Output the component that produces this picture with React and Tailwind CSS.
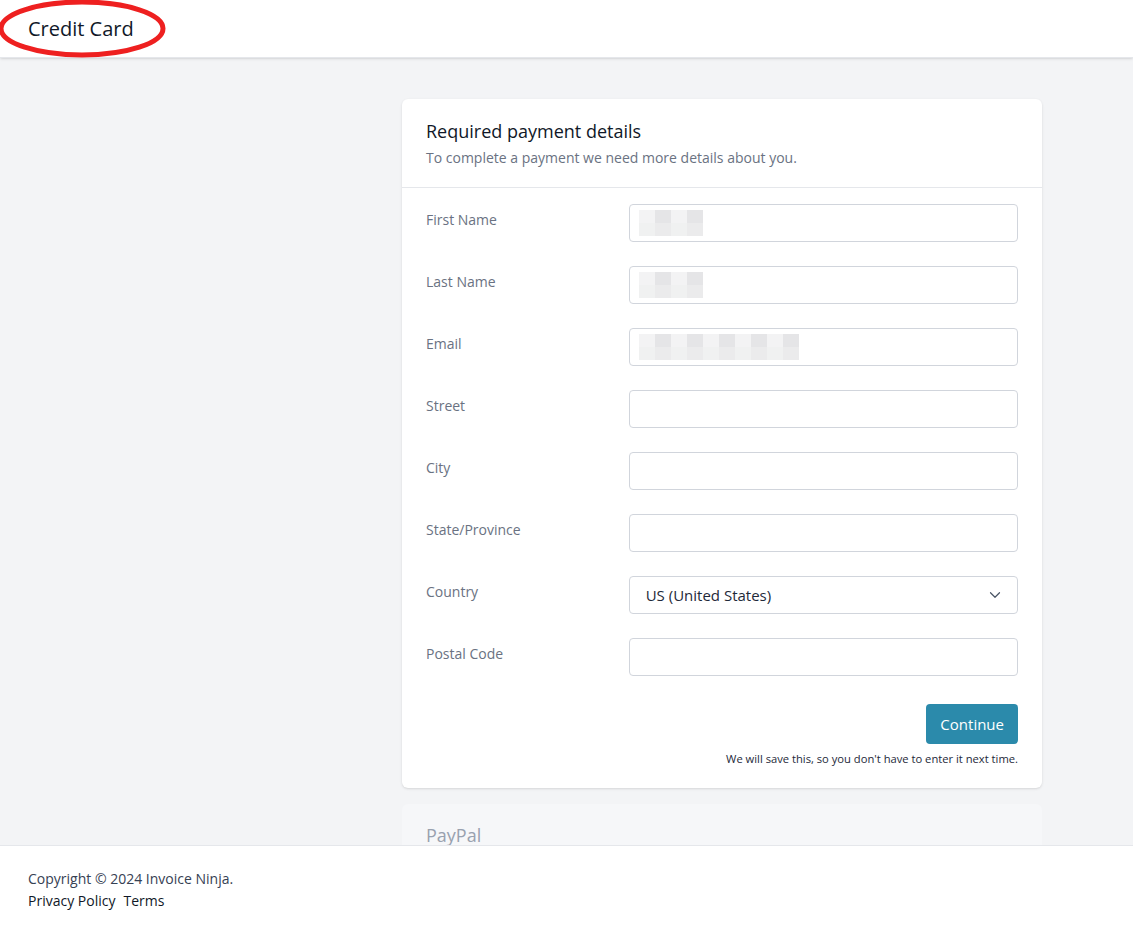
import { ChevronDown } from 'lucide-react';

const fields = [
  { label: 'First Name', blur: [10, 8] },
  { label: 'Last Name', blur: [10, 8] },
  { label: 'Email', blur: [10, 20] },
  { label: 'Street' },
  { label: 'City' },
  { label: 'State/Province' },
  { label: 'Country', select: true },
  { label: 'Postal Code' },
];

// pixelated placeholder for redacted values
const shades = ['bg-[#f3f3f4]', 'bg-[#ececee]', 'bg-[#f0f1f1]', 'bg-[#e5e5e7]', 'bg-[#f5f5f6]', 'bg-[#ebebec]'];

const Blurred = ({ cols }) => (
  <div className="flex flex-col">
    {[0, 1].map(r => (
      <div key={r} className="flex">
        {Array.from({ length: cols }).map((_, c) => (
          <div key={c} className={`w-4 h-[13px] ${shades[(c * 3 + r * 2) % shades.length]}`} />
        ))}
      </div>
    ))}
  </div>
);

const Field = ({ field }) => (
  <div className="grid grid-cols-3 gap-4 items-start py-3">
    <label className="text-sm text-gray-500 pt-[6px] leading-5">{field.label}</label>
    <div className="col-span-2">
      {field.select ? (
        <div className="h-[38px] border border-gray-300 rounded-[4px] flex items-center justify-between pl-4 pr-[13px] text-[15px] text-gray-800 bg-white">
          <span>US (United States)</span>
          <ChevronDown size={18} strokeWidth={1.6} className="text-gray-600" />
        </div>
      ) : (
        <div className="h-[38px] border border-gray-300 rounded-[4px] bg-white flex items-center px-[9px]">
          {field.blur && <Blurred cols={Math.round(field.blur[1] / 2)} />}
        </div>
      )}
    </div>
  </div>
);

export default function App() {
  return (
    <div className="h-screen flex flex-col bg-gray-100 overflow-hidden" style={{ fontFamily: '"Open Sans", "Noto Sans", sans-serif' }}>
      <header className="relative h-[58px] shrink-0 bg-white shadow-sm border-b border-gray-200 flex items-center px-7 z-10">
        <h1 className="text-xl text-gray-900">Credit Card</h1>
        <svg className="absolute left-0 top-0" width="170" height="60" viewBox="0 0 170 60">
          <ellipse cx="82" cy="28.5" rx="81" ry="26.5" fill="none" stroke="#ee2020" strokeWidth="5" />
        </svg>
      </header>

      <main className="flex-1 overflow-hidden pt-[41px]">
        <div className="ml-[402px] w-[640px] flex flex-col gap-4">
          <div className="bg-white rounded-md shadow">
            <div className="px-6 pt-[18px] pb-[19px] border-b border-gray-200">
              <h2 className="text-lg text-gray-900 leading-7">Required payment details</h2>
              <p className="text-sm text-gray-500 leading-5 mt-[3px]">To complete a payment we need more details about you.</p>
            </div>
            <div className="px-6 pt-1">
              {fields.map(f => <Field key={f.label} field={f} />)}
            </div>
            <div className="px-6 pt-4 pb-[21px] flex flex-col items-end">
              <button className="h-10 px-[14px] rounded-[4px] bg-[#2b8aab] text-white text-[15px]">Continue</button>
              <p className="text-[11.2px] leading-4 text-gray-800 mt-[7px]">We will save this, so you don't have to enter it next time.</p>
            </div>
          </div>
          <div className="bg-[#f6f7f9] rounded-md px-6 pt-[17px] pb-8">
            <h2 className="text-lg text-gray-400">PayPal</h2>
          </div>
        </div>
      </main>

      <footer className="h-[84px] shrink-0 bg-white border-t border-gray-200 px-7 pt-[22px] text-sm leading-[22px]">
        <p className="text-gray-700">Copyright © 2024 Invoice Ninja.</p>
        <div className="flex gap-2 text-gray-900">
          <a>Privacy Policy</a>
          <a>Terms</a>
        </div>
      </footer>
    </div>
  );
}
